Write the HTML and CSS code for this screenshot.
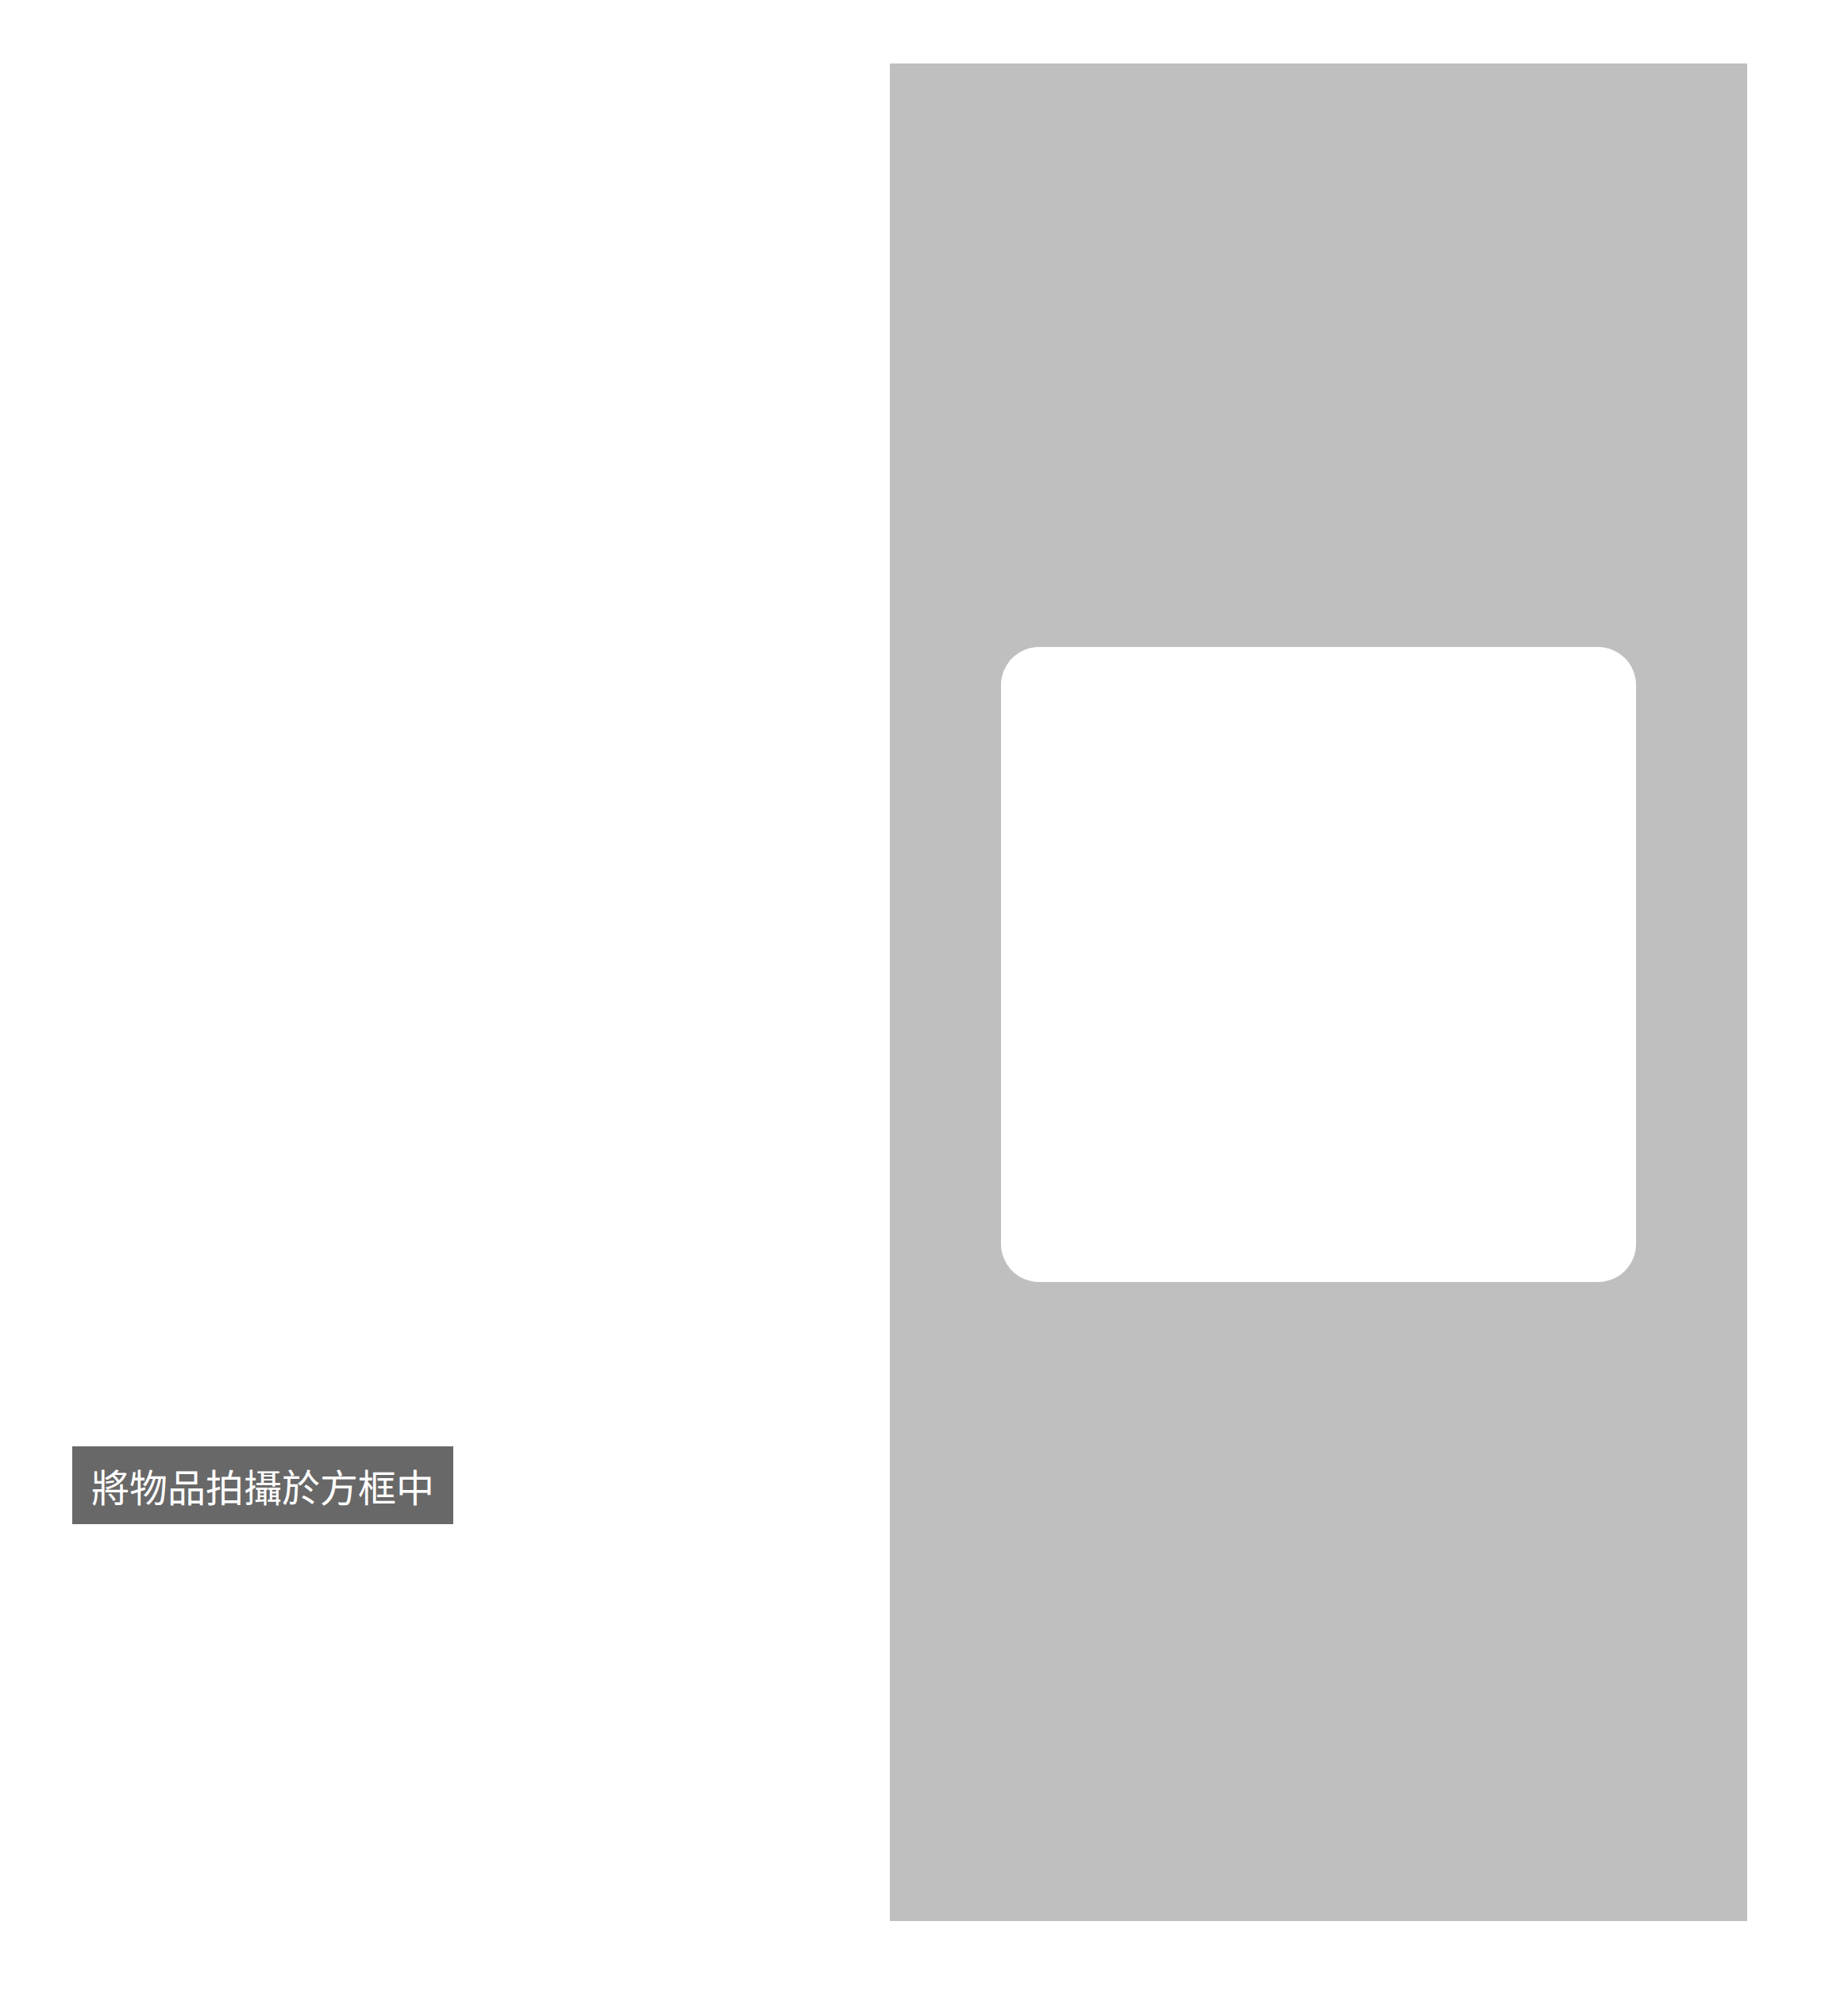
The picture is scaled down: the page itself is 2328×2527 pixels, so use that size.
FILE: index.html
```html
<!DOCTYPE html>
<html lang="zh-Hant">
<head>
<meta charset="utf-8">
<meta name="viewport" content="width=device-width, initial-scale=1">
<title>拍攝物品</title>
<link rel="stylesheet" href="styles.css">
</head>
<body>
<main class="page">
  <section class="hint-column">
    <p class="hint">將物品拍攝於方框中</p>
  </section>
  <section class="camera-mask">
    <div class="viewfinder"></div>
  </section>
</main>
</body>
</html>
```

FILE: styles.css
```css
* {
  box-sizing: border-box;
}

body {
  margin: 0;
  background: #fff;
  font-family: "Noto Sans CJK TC", sans-serif;
}

.page {
  display: grid;
  grid-template-columns: 103fr 108fr;
  padding: 80px 127px 107px 91px;
}

/* The hint sits at about three quarters of the mask's height */
.hint-column {
  display: grid;
  grid-template-rows: 1742fr auto 500fr;
}

.hint {
  grid-row: 2;
  justify-self: start;
  margin: 0;
  padding: 14px 24px;
  background: #686868;
  color: #fff;
  font-size: 48px;
  font-weight: 400;
  line-height: 70px;
  white-space: nowrap;
}

.camera-mask {
  display: grid;
  grid-template-columns: 7fr 40fr 7fr;
  grid-template-rows: 147fr 160fr 161fr;
  aspect-ratio: 6 / 13;
  background: #bfbfbf;
}

.viewfinder {
  grid-area: 2 / 2;
  border-radius: 48px;
  background: #fff;
}
```
